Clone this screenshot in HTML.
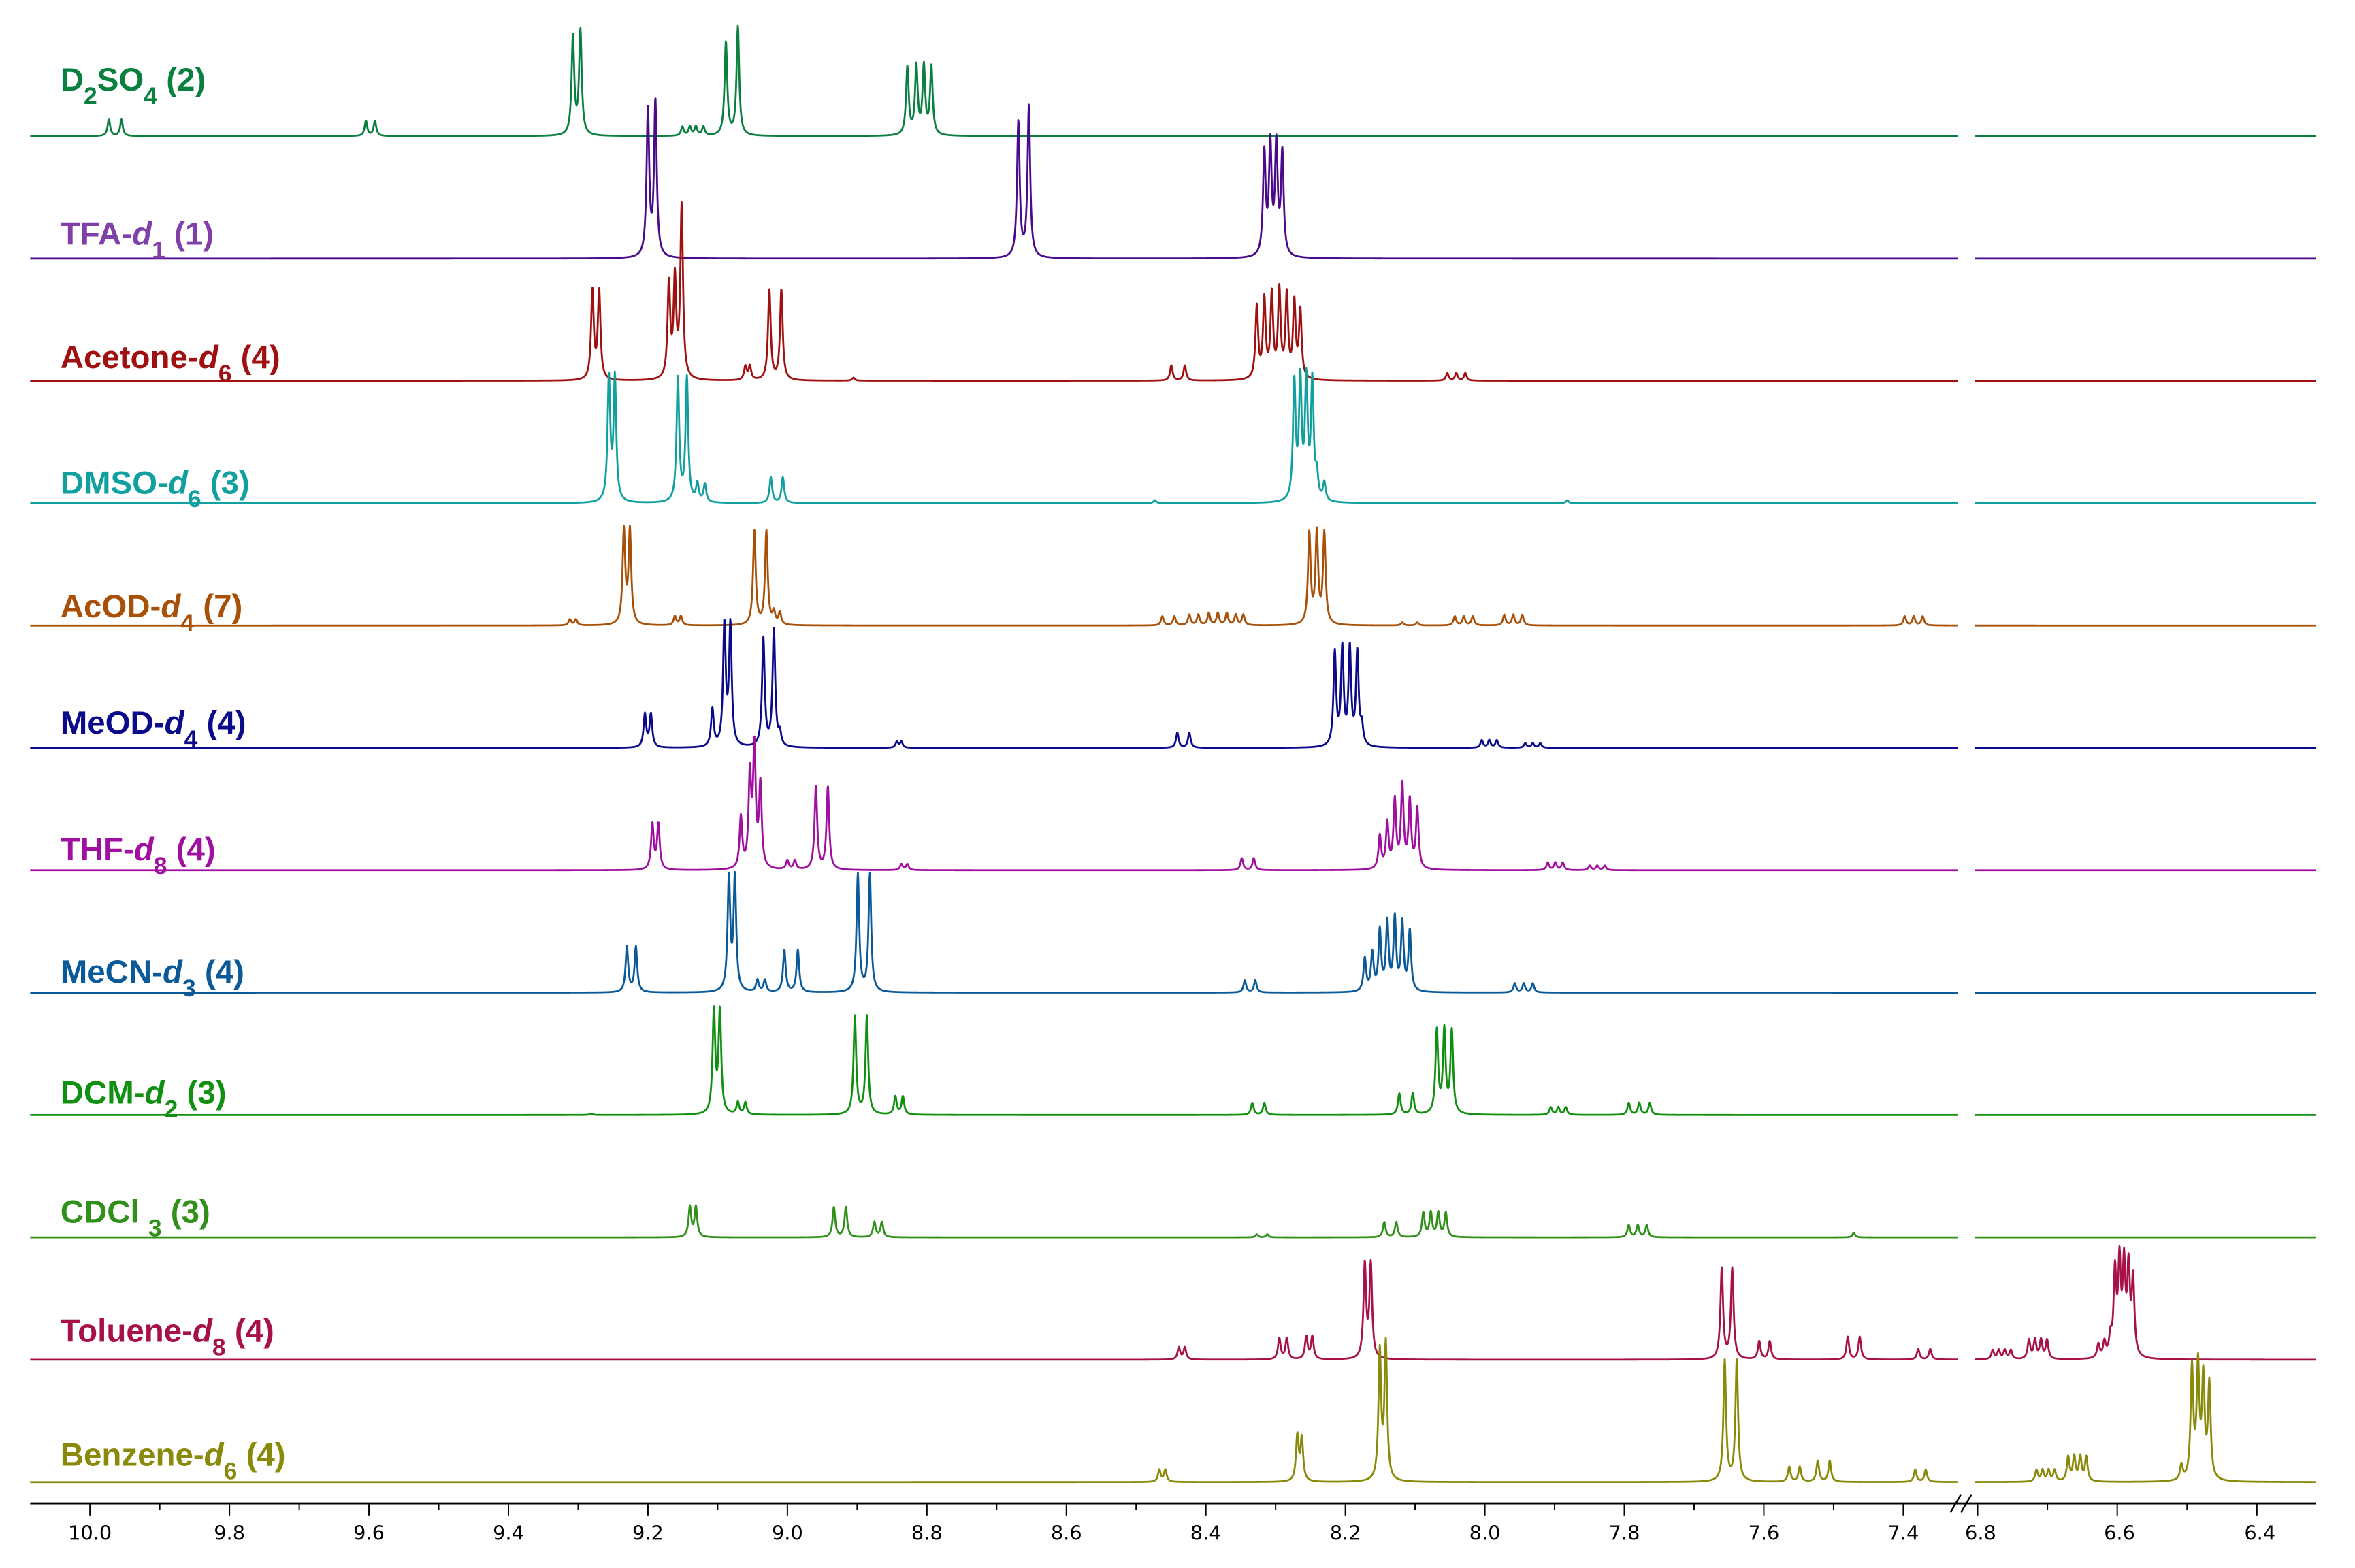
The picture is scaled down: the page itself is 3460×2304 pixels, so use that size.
<!DOCTYPE html>
<html><head><meta charset="utf-8"><style>
html,body{margin:0;padding:0;background:#fff}
svg{display:block}
.lb{font-family:"Liberation Sans",Arial,sans-serif;font-weight:bold;font-size:21.4px}
.sb{font-size:16px}
.ax{font-family:"DejaVu Sans","Liberation Sans",sans-serif;font-size:13px;fill:#000}
</style></head><body>
<svg id="s" width="3460" height="2304" viewBox="0 0 1560 1038.8" preserveAspectRatio="none" xmlns="http://www.w3.org/2000/svg">
<g id="spec"></g>
<g class="lb">
<text x="40" y="60" fill="#0a8040">D<tspan class="sb" dy="9">2</tspan><tspan dy="-9">SO</tspan><tspan class="sb" dy="9">4</tspan><tspan dy="-9"> (2)</tspan></text>
<text x="40" y="162" fill="#8040a8">TFA-<tspan font-style="italic">d</tspan><tspan class="sb" dy="9">1</tspan><tspan dy="-9"> (1)</tspan></text>
<text x="40" y="244" fill="#a01010">Acetone-<tspan font-style="italic">d</tspan><tspan class="sb" dy="9">6</tspan><tspan dy="-9"> (4)</tspan></text>
<text x="40" y="327" fill="#10a0a0">DMSO-<tspan font-style="italic">d</tspan><tspan class="sb" dy="9">6</tspan><tspan dy="-9"> (3)</tspan></text>
<text x="40" y="409" fill="#a85008">AcOD-<tspan font-style="italic">d</tspan><tspan class="sb" dy="9">4</tspan><tspan dy="-9"> (7)</tspan></text>
<text x="40" y="486" fill="#0a0a8a">MeOD-<tspan font-style="italic">d</tspan><tspan class="sb" dy="9">4</tspan><tspan dy="-9"> (4)</tspan></text>
<text x="40" y="570" fill="#a010a0">THF-<tspan font-style="italic">d</tspan><tspan class="sb" dy="9">8</tspan><tspan dy="-9"> (4)</tspan></text>
<text x="40" y="651" fill="#0a5a9a">MeCN-<tspan font-style="italic">d</tspan><tspan class="sb" dy="9">3</tspan><tspan dy="-9"> (4)</tspan></text>
<text x="40" y="731" fill="#109010">DCM-<tspan font-style="italic">d</tspan><tspan class="sb" dy="9">2</tspan><tspan dy="-9"> (3)</tspan></text>
<text x="40" y="810" fill="#30901a">CDCl <tspan class="sb" dy="9">3</tspan><tspan dy="-9"> (3)</tspan></text>
<text x="40" y="889" fill="#a8104a">Toluene-<tspan font-style="italic">d</tspan><tspan class="sb" dy="9">8</tspan><tspan dy="-9"> (4)</tspan></text>
<text x="40" y="971" fill="#8a8a0a">Benzene-<tspan font-style="italic">d</tspan><tspan class="sb" dy="9">6</tspan><tspan dy="-9"> (4)</tspan></text>
</g>
<g stroke="#000" fill="none">
<line x1="20" y1="996" x2="1534" y2="996" stroke-width="1.3"/>
<g id="ticks" stroke-width="0.9"></g>
<line x1="1292" y1="1002" x2="1299" y2="990" stroke-width="1.1" stroke="#000"/>
<line x1="1299" y1="1002" x2="1306" y2="990" stroke-width="1.1" stroke="#000"/>
</g>
<g class="ax" text-anchor="middle">
<text x="59.6" y="1020">10.0</text><text x="152" y="1020">9.8</text><text x="244.4" y="1020">9.6</text><text x="336.8" y="1020">9.4</text>
<text x="429.2" y="1020">9.2</text><text x="521.6" y="1020">9.0</text><text x="614" y="1020">8.8</text><text x="706.4" y="1020">8.6</text>
<text x="798.8" y="1020">8.4</text><text x="891.2" y="1020">8.2</text><text x="983.6" y="1020">8.0</text><text x="1076" y="1020">7.8</text>
<text x="1168.4" y="1020">7.6</text><text x="1260.8" y="1020">7.4</text>
<text x="1312" y="1020">6.8</text><text x="1404" y="1020">6.6</text><text x="1497" y="1020">6.4</text>
</g>
</svg>
<script>
var NS="http://www.w3.org/2000/svg";
var T=document.getElementById("ticks");
function ln(x,l){var e=document.createElementNS(NS,"line");e.setAttribute("x1",x);e.setAttribute("x2",x);e.setAttribute("y1",996);e.setAttribute("y2",996+l);T.appendChild(e);}
for(var i=0;i<=26;i++){ln(59.6+i*46.2,i%2?4.5:8);}
for(var i=0;i<=4;i++){ln(1310+i*46.25,i%2?4.5:8);}
var S=[
["#0a8040",[[72.6,11],[81,11],[244,10],[250,10],[382,65],[387,69],[455,6],[460,6],[464,6],[469,6],[484,62],[492,72],[605,45],[611,45],[616,45],[621,45]]],
["#4a0a8a",[[432,97],[437,103],[679,90],[686,100],[843,68],[847,72],[851,72],[855,68]]],
["#a01010",[[395,59],[399.5,59],[446,63],[450,65],[454.5,114],[497,9],[500,9],[513,60],[521,60],[569,2],[781,10],[790,10],[838,48],[843,52],[848,55],[853,58],[858,55],[863,50],[867,45],[965,5],[971,5],[977,5]]],
["#10a0a0",[[406,82],[410,82],[452,82],[458,82],[465,12],[470,12],[514,17],[522,17],[863,78],[867,78],[871,78],[875,78],[878,15],[883,12],[770,2],[1045,2]]],
["#a85008",[[380,4],[384,4],[416,62],[420,62],[450,6],[454,6],[503,62],[511,62],[516,8],[520,8],[775,6],[783,6],[793,7],[799,7],[806,8],[812,8],[818,8],[824,7],[829,7],[873,60],[878,60],[883,60],[935,2],[945,2],[970,6],[976,6],[982,6],[1003,7],[1009,7],[1015,7],[1270,6],[1276,6],[1282,6]]],
["#0a0a8a",[[430,22],[434,22],[475,25],[483,80],[487,80],[509,72],[516,78],[520,8],[598,4],[601,4],[785,10],[793,10],[890,62],[895,64],[900,64],[905,62],[908,12],[988,5],[993,5],[998,5],[1017,3],[1022,3],[1027,3]]],
["#a010a0",[[435,30],[439,30],[494,34],[500,60],[503,78],[507,55],[525,6],[530,6],[544,55],[552,55],[601,4],[605,4],[828,8],[836,8],[920,22],[925,30],[930,45],[935,55],[940,45],[945,40],[1032,5],[1037,5],[1042,5],[1060,3],[1065,3],[1070,3]]],
["#0a5a9a",[[418,30],[424,30],[486,75],[490,75],[505,8],[510,8],[523,28],[532,28],[572,78],[580,78],[830,8],[837,8],[910,22],[915,25],[920,40],[925,45],[930,48],[935,45],[940,40],[1010,6],[1016,6],[1022,6]]],
["#109010",[[394,1],[476,68],[480,68],[492,8],[497,8],[570,65],[578,65],[597,12],[602,12],[835,8],[843,8],[933,14],[942,14],[958,55],[963,55],[968,55],[1034,5],[1039,5],[1044,5],[1086,8],[1093,8],[1100,8]]],
["#30901a",[[460,20],[464,20],[556,20],[564,20],[583,10],[588,10],[838,2],[845,2],[923,10],[931,10],[949,16],[954,16],[959,16],[964,16],[1086,8],[1092,8],[1098,8],[1236,3]]],
["#a8104a",[[786,8],[790,8],[853,14],[858,14],[871,15],[875,15],[910,62],[914,62],[1148,60],[1155,60],[1173,12],[1180,12],[1232,15],[1240,15],[1279,7],[1287,7]],
  [[1320,6],[1324,6],[1328,6],[1332,6],[1344,12.5],[1348,12.5],[1352,12.5],[1356,12.5],[1390,9],[1394,10],[1398,12],[1401,55],[1404,60],[1407,58],[1410,56],[1413,50]]],
["#8a8a0a",[[773,8],[777,8],[865,30],[868,28],[920,85],[924,90],[1150,80],[1158,80],[1193,10],[1200,10],[1212,14],[1220,14],[1277,8],[1284,8]],
  [[1349,7.5],[1353,7.5],[1357,7.5],[1361,7.5],[1370,16],[1374,16],[1378,16],[1382,16],[1445,10],[1452,74],[1456,74],[1459.5,66],[1463.5,63]]]
];
var G=document.getElementById("spec");
S.forEach(function(s,i){
  var b=90.2+i*81.06, g=1.05;
  var pk=s[1].map(function(p){return [59.6+(p[0]-60)*0.9935,p[1]];});
  if(s[2]) pk=pk.concat(s[2]);
  function f(x){var y=0;for(var k=0;k<pk.length;k++){var d=(x-pk[k][0])/g;y+=pk[k][1]/(1+d*d);}return y;}
  [[20,1297],[1308,1534]].forEach(function(r){
    var d="";for(var x=r[0];x<=r[1];x+=0.25){d+=(d?"L":"M")+x.toFixed(2)+","+(b-f(x)).toFixed(2);}
    var p=document.createElementNS(NS,"path");p.setAttribute("d",d);p.setAttribute("fill","none");p.setAttribute("stroke",s[0]);p.setAttribute("stroke-width","1.25");p.setAttribute("stroke-linejoin","round");G.appendChild(p);
  });
});
</script>
</body></html>
